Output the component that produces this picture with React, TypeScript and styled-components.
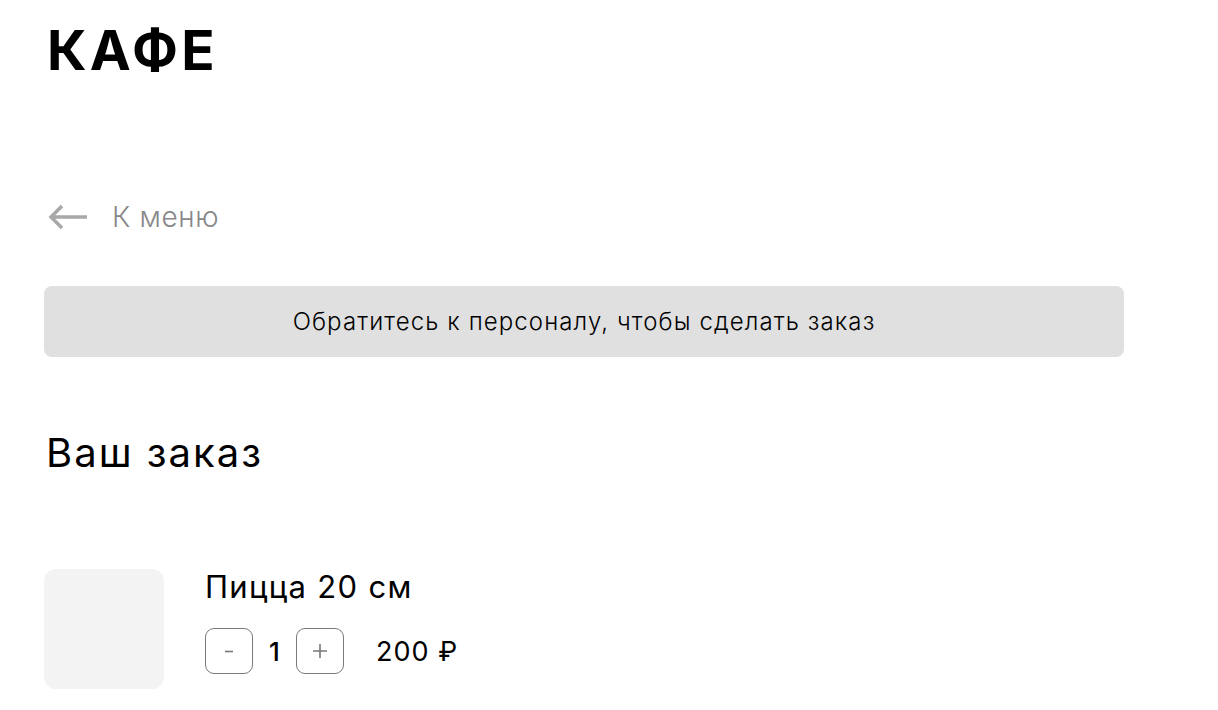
import styled, { createGlobalStyle } from "styled-components";

const GlobalStyle = createGlobalStyle`
  body {
    margin: 0;
    background: #ffffff;
    font-family: "Inter", "Noto Sans", sans-serif;
    color: #000;
  }
`;

const Page = styled.div`
  padding: 0 94px 0 44px;
  max-width: 1080px;
`;

const Logo = styled.h1`
  margin: 0;
  padding-top: 18px;
  padding-left: 3px;
  font-size: 55px;
  font-weight: 700;
  line-height: 64px;
  letter-spacing: 3.3px;
`;

const BackLink = styled.a`
  display: flex;
  align-items: center;
  gap: 24px;
  margin-top: 118px;
  padding-left: 4px;
  color: #888;
  font-size: 28px;
  font-weight: 300;
  letter-spacing: 0.6px;
  text-decoration: none;
  cursor: pointer;
`;

const Notice = styled.div`
  margin-top: 52px;
  height: 71px;
  border-radius: 8px;
  background: #e0e0e0;
  display: flex;
  align-items: center;
  justify-content: center;
  font-size: 24px;
  font-weight: 300;
  letter-spacing: 1.1px;
`;

const Title = styled.h2`
  margin: 72px 0 0 2px;
  font-size: 40px;
  font-weight: 400;
  line-height: 48px;
  letter-spacing: 2px;
`;

const Item = styled.div`
  display: flex;
  gap: 41px;
  margin-top: 92px;
`;

const Thumb = styled.div`
  width: 120px;
  height: 120px;
  border-radius: 12px;
  background: #f3f3f3;
  flex-shrink: 0;
`;

const Info = styled.div`
  display: flex;
  flex-direction: column;
  gap: 23px;
`;

const Name = styled.div`
  font-size: 31px;
  line-height: 36px;
  letter-spacing: 1.3px;
`;

const Controls = styled.div`
  display: flex;
  align-items: center;
`;

const QtyButton = styled.button`
  width: 48px;
  height: 46px;
  border: 1.5px solid #7a7a7a;
  border-radius: 9px;
  background: #fff;
  display: flex;
  align-items: center;
  justify-content: center;
  padding: 0;
  cursor: pointer;
`;

const Qty = styled.span`
  width: 43px;
  text-align: center;
  font-size: 26px;
  font-weight: 500;
`;

const Price = styled.span`
  margin-left: 32px;
  font-size: 27px;
  letter-spacing: 1px;
`;

export default function App() {
  return (
    <>
      <GlobalStyle />
      <Page>
        <Logo>КАФЕ</Logo>
        <BackLink>
          <svg width="40" height="26" viewBox="0 0 40 26" fill="none">
            <path d="M39 13H3M14 2L3 13l11 11" stroke="#a8a8a8" strokeWidth="3.5" strokeLinecap="butt" />
          </svg>
          К меню
        </BackLink>
        <Notice>Обратитесь к персоналу, чтобы сделать заказ</Notice>
        <Title>Ваш заказ</Title>
        <Item>
          <Thumb />
          <Info>
            <Name>Пицца 20 см</Name>
            <Controls>
              <QtyButton aria-label="Уменьшить">
                <svg width="16" height="16" viewBox="0 0 16 16">
                  <path d="M4 8.5h8" stroke="#777" strokeWidth="1.6" />
                </svg>
              </QtyButton>
              <Qty>1</Qty>
              <QtyButton aria-label="Увеличить">
                <svg width="16" height="16" viewBox="0 0 16 16">
                  <path d="M1 8h14M8 1v14" stroke="#777" strokeWidth="1.6" />
                </svg>
              </QtyButton>
              <Price>200 ₽</Price>
            </Controls>
          </Info>
        </Item>
      </Page>
    </>
  );
}
